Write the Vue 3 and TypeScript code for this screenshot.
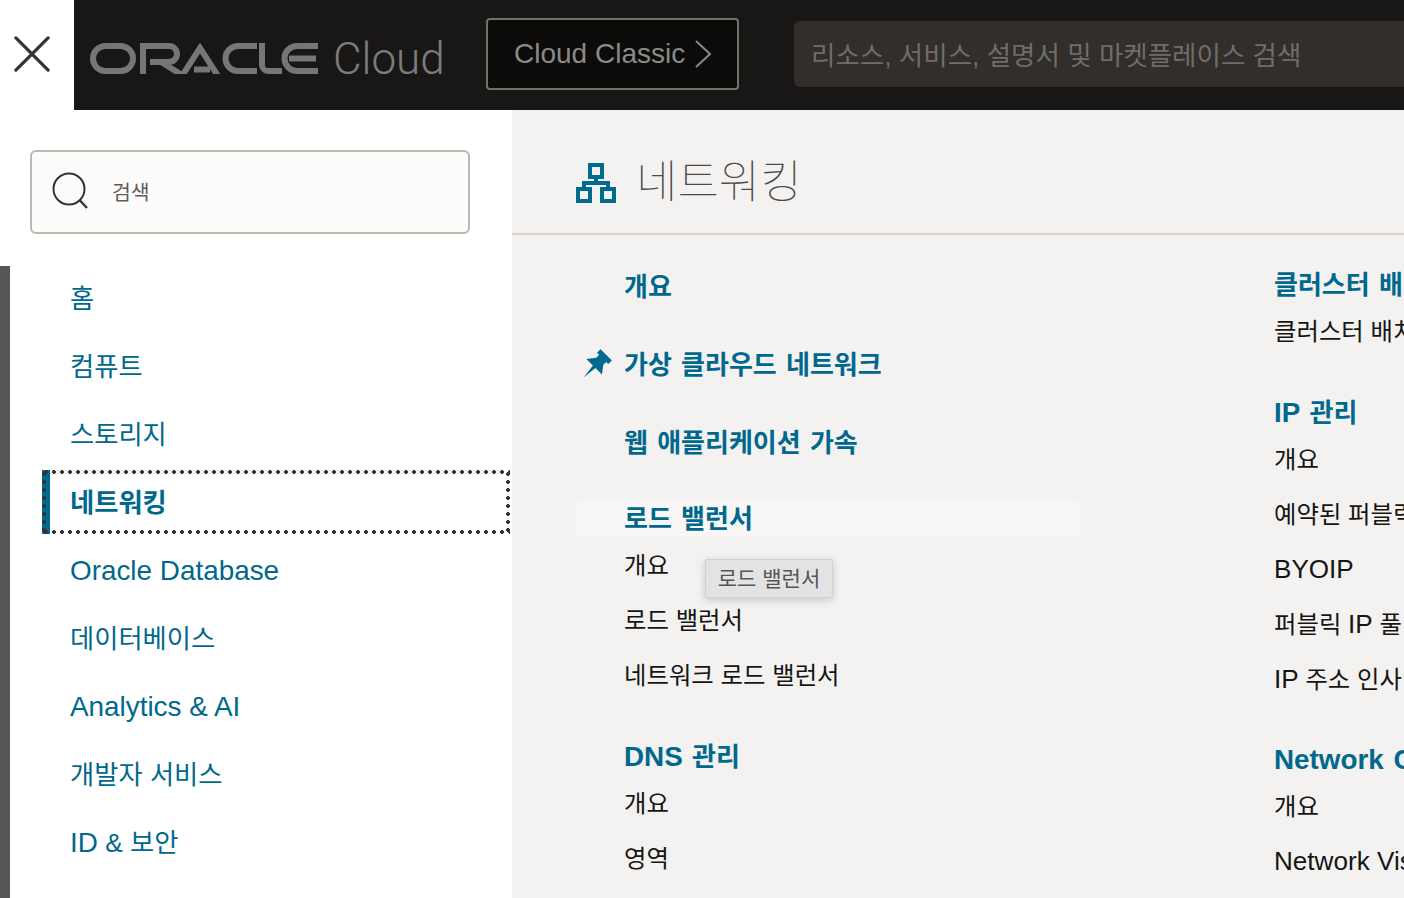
<script setup lang="ts">
interface Group { title: string; items: string[]; hover?: boolean; pinned?: boolean }
interface Run { text: string; latin: boolean }

const nav: string[] = ['홈', '컴퓨트', '스토리지', '네트워킹', 'Oracle Database', '데이터베이스', 'Analytics & AI', '개발자 서비스', 'ID & 보안']

const leftGroups: Group[] = [
  { title: '개요', items: [] },
  { title: '가상 클라우드 네트워크', items: [], pinned: true },
  { title: '웹 애플리케이션 가속', items: [] },
  { title: '로드 밸런서', items: ['개요', '로드 밸런서', '네트워크 로드 밸런서'], hover: true },
  { title: 'DNS 관리', items: ['개요', '영역'] },
]

const rightGroups: Group[] = [
  { title: '클러스터 배치 그룹', items: ['클러스터 배치 그룹'] },
  { title: 'IP 관리', items: ['개요', '예약된 퍼블릭 IP', 'BYOIP', '퍼블릭 IP 풀', 'IP 주소 인사이트'] },
  { title: 'Network Command Center', items: ['개요', 'Network Visualizer'] },
]

// Latin glyphs run slightly larger than Hangul in the reference's font pairing.
function runs(text: string): Run[] {
  return text
    .split(/([A-Za-z][A-Za-z &]*[A-Za-z])/)
    .filter((t) => t.length > 0)
    .map((t) => ({ text: t, latin: /^[A-Za-z]/.test(t) }))
}

const isLatin = (t: string): boolean => /^[A-Za-z &]+$/.test(t)
</script>

<template>
  <div class="page">
    <header class="topbar">
      <button class="close" aria-label="닫기">
        <svg width="36" height="36" viewBox="0 0 38 38"><path d="M2 2 L36 36 M36 2 L2 36" stroke="#333" stroke-width="3.4" stroke-linecap="round" fill="none"/></svg>
      </button>
      <div class="bar">
        <div class="brand">
          <svg class="wordmark" width="229" height="31" viewBox="0 0 229 31" fill="none" stroke="#767676" stroke-width="6">
            <rect x="3" y="3" width="40" height="25" rx="12.5"/>
            <path d="M53 31 V3 H79 a8 8 0 0 1 0 16 H60 L71 19 L92 32"/>
            <path d="M92 33 L110 5 L128 33 M104 26.5 H120"/>
            <path d="M167 3 H148 a12.5 12.5 0 0 0 0 25 H167"/>
            <path d="M172 0 V22 a6 6 0 0 0 6 6 H192"/>
            <path d="M228 3 H207 a12.5 12.5 0 0 0 0 25 H228 M199 15.5 H226"/>
          </svg>
          <span class="cloud">Cloud</span>
        </div>
        <a class="classic">
          <span>Cloud Classic</span>
          <svg width="18" height="28" viewBox="0 0 18 28"><path d="M2 1 L16 14 L2 27" stroke="#8a8a88" stroke-width="2" fill="none"/></svg>
        </a>
        <div class="global-search">리소스, 서비스, 설명서 및 마켓플레이스 검색</div>
      </div>
    </header>

    <div class="body">
      <aside class="side">
        <div class="search-wrap">
          <div class="search">
            <svg width="38" height="38" viewBox="0 0 38 38"><circle cx="17" cy="17" r="15.5" stroke="#333" stroke-width="2" fill="none"/><path d="M27.5 28 L35 36" stroke="#333" stroke-width="2.4" fill="none"/></svg>
            <span>검색</span>
          </div>
        </div>
        <div class="nav-area">
          <div class="rail"></div>
          <nav class="nav">
            <a v-for="n in nav" :key="n" class="nav-item" :class="{ active: n === '네트워킹', 'latin-row': isLatin(n) }">
              <span><span v-for="(r, k) in runs(n)" :key="k" :class="{ latin: r.latin }">{{ r.text }}</span></span>
            </a>
          </nav>
        </div>
      </aside>

      <main class="main">
        <div class="main-head">
          <svg width="40" height="40" viewBox="0 0 40 40" fill="none" stroke="#006b8f" stroke-width="4">
            <rect x="14" y="2" width="12" height="12"/>
            <rect x="2" y="26" width="12" height="12"/>
            <rect x="26" y="26" width="12" height="12"/>
            <path d="M20 14 V20 M8 26 V20 H32 V26"/>
          </svg>
          <h1>네트워킹</h1>
        </div>
        <div class="columns">
          <section class="col col-left">
            <div v-for="g in leftGroups" :key="g.title" class="group" :class="{ single: g.items.length === 0 }">
              <h2 :class="{ hover: g.hover }">
                <svg v-if="g.pinned" class="pin" width="28" height="28" viewBox="0 0 28 28"><g fill="#006b8f" transform="rotate(45 14 14)"><path d="M6 1 H22 V6 H19 V10 L25 18 H15.8 L14 33 L12.2 18 H3 L9 10 V6 H6 Z"/></g></svg>
                <span v-for="(r, k) in runs(g.title)" :key="k" :class="{ latin: r.latin }">{{ r.text }}</span>
              </h2>
              <a v-for="i in g.items" :key="i" class="link">
                <span v-for="(r, k) in runs(i)" :key="k" :class="{ latin: r.latin }">{{ r.text }}</span>
              </a>
              <div v-if="g.hover" class="tooltip">로드 밸런서</div>
            </div>
          </section>
          <section class="col col-right">
            <div v-for="g in rightGroups" :key="g.title" class="group">
              <h2><span v-for="(r, k) in runs(g.title)" :key="k" :class="{ latin: r.latin }">{{ r.text }}</span></h2>
              <a v-for="i in g.items" :key="i" class="link">
                <span v-for="(r, k) in runs(i)" :key="k" :class="{ latin: r.latin }">{{ r.text }}</span>
              </a>
            </div>
          </section>
        </div>
      </main>
    </div>
  </div>
</template>

<style>
html, body { margin: 0; background: #fff; overflow: hidden; }
</style>

<style scoped>
.page {
  width: 1404px;
  height: 898px;
  overflow: hidden;
  display: flex;
  flex-direction: column;
  font-family: "Liberation Sans", "Noto Sans CJK KR", sans-serif;
  background: #fff;
}
.latin { font-size: 1.07em; }
.topbar { display: flex; height: 110px; flex: none; }
.close {
  width: 74px; flex: none; border: 0; background: #fff; padding: 0 10px 3px 0;
  display: flex; align-items: center; justify-content: center; box-sizing: border-box;
}
.bar { flex: 1; background: #181716; display: flex; align-items: flex-start; min-width: 0; }
.brand { display: flex; align-items: center; margin: 33px 0 0 16px; width: 396px; height: 52px; }
.wordmark { flex: none; margin-bottom: 1px; }
.cloud { color: #7c7c7b; font-family: "Roboto", sans-serif; font-weight: 300; font-size: 44px; line-height: 52px; margin-left: 14px; }
.classic {
  box-sizing: border-box; width: 253px; height: 72px; margin-top: 18px; flex: none;
  display: flex; align-items: center; gap: 9px; padding-left: 26px;
  border: 2px solid #73716e; border-radius: 4px; background: #0c0b0a;
  color: #8a8a88; font-size: 28px;
}
.global-search {
  flex: 1; height: 66px; margin: 21px 0 0 55px; box-sizing: border-box; padding: 0 0 2px 17px;
  background: #312e2b; border-radius: 6px 0 0 6px; display: flex; align-items: center;
  color: #6f6d6a; font-size: 26.5px; white-space: nowrap;
}
.body { flex: 1; display: flex; min-height: 0; }
.side { width: 512px; flex: none; background: #fff; display: flex; flex-direction: column; min-height: 0; }
.search-wrap { padding: 40px 42px 0 30px; height: 156px; box-sizing: border-box; flex: none; }
.search {
  box-sizing: border-box; height: 84px; border: 2px solid #bdb8b0; border-radius: 6px; background: #fcfcfa;
  display: flex; align-items: center; padding-left: 20px; padding-bottom: 2px;
  color: #5f5d5a; font-size: 20.5px;
}
.search span { margin-left: 22px; }
.nav-area { flex: 1; display: flex; min-height: 0; }
.rail { width: 10px; background: #565656; flex: none; }
.nav { flex: 1; padding: 0 2px 0 32px; display: flex; flex-direction: column; min-width: 0; }
.nav-item {
  box-sizing: border-box; height: 68px; flex: none; display: flex; align-items: center; padding: 0 0 3px 28px;
  color: #00688c; font-size: 26.3px; white-space: nowrap;
}
.nav-item .latin { font-size: 1.06em; }
.nav-item.latin-row { padding-bottom: 0; padding-top: 2px; }
.nav-item:first-child { margin-top: -2px; }
.nav-item.active {
  height: 64px; margin: 2px 0; font-weight: 700; padding-bottom: 4px;
  background:
    radial-gradient(circle, #333 1.7px, transparent 2.2px) repeat-x left top / 8px 4px,
    radial-gradient(circle, #333 1.7px, transparent 2.2px) repeat-x left bottom / 8px 4px,
    radial-gradient(circle, #333 1.7px, transparent 2.2px) repeat-y right top / 4px 8px,
    radial-gradient(circle, #333 1.7px, transparent 2.2px) repeat-y left top / 4px 8px,
    linear-gradient(#00688c, #00688c) no-repeat left top / 8px 100%;
}
.main { flex: 1; background: #f3f2f1; min-width: 0; }
.main-head {
  box-sizing: border-box; height: 125px; padding: 53px 0 0 64px; border-bottom: 2px solid #d9d3ce;
  display: flex; align-items: flex-start;
}
.main-head h1 {
  margin: -19px 0 0 20px; font-size: 45px; font-weight: 100; color: #4d4a47;
  font-family: "Noto Sans CJK KR", sans-serif; line-height: 70px;
}
.columns { display: flex; padding: 35px 0 0 64px; }
.col { flex: none; }
.col-left { width: 698px; }
.col-right { white-space: nowrap; margin-top: -3px; }
.group { margin-bottom: 36px; position: relative; }
.group.single { margin-bottom: 43px; }
.group.single:nth-child(3) { margin-bottom: 40px; }
.col-right .group:nth-child(2) { margin-bottom: 35px; }
.group h2 {
  margin: 0 0 2px; height: 35px; line-height: 35px; font-size: 26px; font-weight: 700; color: #00688c;
  padding-left: 48px; position: relative; white-space: nowrap; word-spacing: 2px;
}
.col-left .group h2 { width: 456px; border-radius: 6px; }
.col-right .group:first-child h2 { line-height: 37px; }
.group h2.hover { background: #f8f7f6; line-height: 37px; }
.pin { position: absolute; left: 7px; top: 2px; overflow: visible; }
.link {
  display: block; height: 55px; line-height: 55px; font-size: 24.4px; color: #161513; padding-left: 48px; white-space: nowrap;
}
.col-right .group h2, .col-right .link { padding-left: 0; }
.tooltip {
  position: absolute; left: 129px; top: 58px; box-sizing: border-box; width: 128px; height: 39px; padding-bottom: 3px;
  background: #e3e3e3; border: 1px solid #d0d0d0; border-radius: 2px;
  box-shadow: 0 2px 8px rgba(0,0,0,.18);
  display: flex; align-items: center; justify-content: center;
  color: #555; font-size: 21px; white-space: nowrap;
}
</style>
